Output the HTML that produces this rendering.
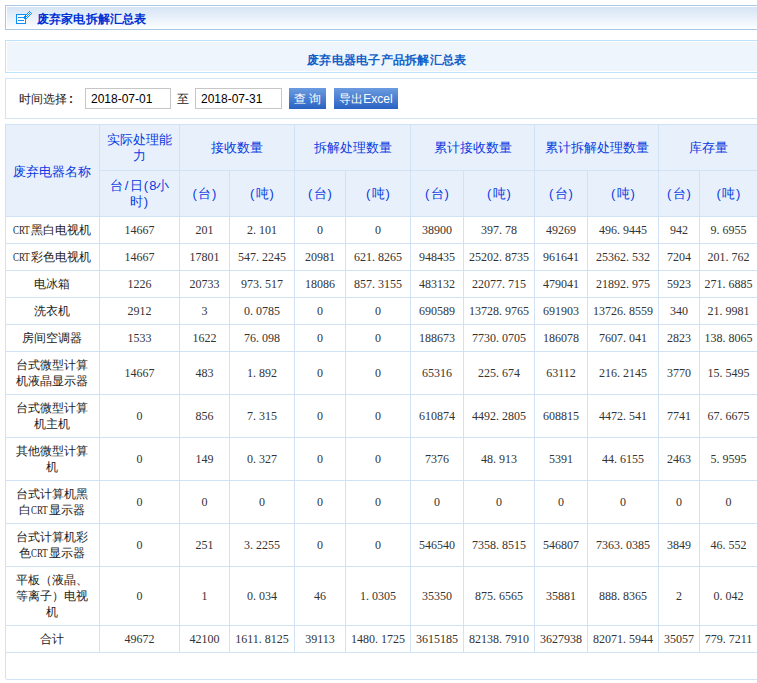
<!DOCTYPE html>
<html><head><meta charset="utf-8"><style>
html,body{margin:0;padding:0;background:#fff;width:757px;height:683px;overflow:hidden;position:relative}
body{font-family:"Liberation Sans",sans-serif;font-size:12px;color:#222}
.box{position:absolute;box-sizing:border-box}
#t1{left:5px;top:5px;width:763px;height:25px;border:1px solid #aac8e4;background:linear-gradient(#d4e3f4,#fdfeff);box-shadow:inset 0 0 0 1px #fff}
#t1 .tx{position:absolute;left:31px;top:6px;font-weight:bold;font-size:12px;color:#0030d4;line-height:14px;letter-spacing:0.15px}
#t2{left:5px;top:40px;width:763px;height:33px;border:1px solid #bde3fb;background:#eff5fd;box-shadow:inset 0 0 0 1px #fff}
#t2 .tx{position:absolute;left:301px;top:12px;letter-spacing:0.25px;font-weight:bold;font-size:12px;color:#1060c8;line-height:14px}
#t3{left:5px;top:78px;width:763px;height:41px;border:1px solid #d2e3f3;background:#fff}
.lbl{position:absolute;top:91px;font-size:12px;color:#222;line-height:16px}
.inp{position:absolute;top:88px;height:21px;box-sizing:border-box;border:1px solid #c6c6c6;background:#fff;font-size:12px;line-height:21px;padding-left:5px;color:#000}
.btn{position:absolute;top:88px;height:21px;box-sizing:border-box;background:linear-gradient(#6b9be0,#2a62c2);color:#fff;font-size:12px;line-height:23px;text-align:center}
.c{position:absolute;box-sizing:content-box;border-right:1px solid #d0e2f4;border-bottom:1px solid #d0e2f4;display:flex;align-items:center;justify-content:center;text-align:center;line-height:16px;overflow:hidden}
#tb{position:absolute;left:5px;top:124px;width:763px;height:555px;box-sizing:border-box;border-left:1px solid #d0e2f4;border-top:1px solid #d0e2f4}
.h{background:#e8f1fb;color:#0a3ae0;font-size:13px;line-height:16px}
.h s{text-decoration:none;display:inline-block;width:6.5px;text-align:center}
.d{background:#fff;color:#222}
.n{font-family:"Liberation Serif",serif;font-size:12px;color:#333}
.n i{font-style:normal;display:inline-block;width:6px;text-align:left}
.crt{font-weight:normal;font-family:"Liberation Serif",serif;display:inline-block;width:18px;white-space:nowrap;vertical-align:top}
.crt u{text-decoration:none;display:inline-block;transform:scaleX(0.74);transform-origin:0 0}
.nm span{position:relative;left:-1px}
.hn span{position:relative;left:-1px;top:1px}
</style></head><body>
<div class="box" id="t1"><svg style="position:absolute;left:10px;top:4px" width="18" height="15" viewBox="0 0 18 15" shape-rendering="crispEdges">
<rect x="0.5" y="4.5" width="9" height="9" fill="#fff" stroke="#0f8ef5" stroke-width="1"/>
<rect x="2" y="7" width="6" height="1" fill="#0f8ef5"/>
<rect x="2" y="10" width="6" height="1" fill="#0f8ef5"/>
<rect x="8" y="6" width="1" height="1" fill="#0a8ef5"/><rect x="9" y="5" width="1" height="1" fill="#0a8ef5"/><rect x="9" y="6" width="1" height="1" fill="#ffffff"/><rect x="9" y="7" width="1" height="1" fill="#0a8ef5"/><rect x="10" y="4" width="1" height="1" fill="#0a8ef5"/><rect x="10" y="5" width="1" height="1" fill="#ffffff"/><rect x="10" y="6" width="1" height="1" fill="#0a8ef5"/><rect x="10" y="7" width="1" height="1" fill="#ffffff"/><rect x="10" y="8" width="1" height="1" fill="#0a8ef5"/><rect x="11" y="3" width="1" height="1" fill="#0a8ef5"/><rect x="11" y="4" width="1" height="1" fill="#ffffff"/><rect x="11" y="5" width="1" height="1" fill="#0a8ef5"/><rect x="11" y="6" width="1" height="1" fill="#ffffff"/><rect x="11" y="7" width="1" height="1" fill="#0a8ef5"/><rect x="12" y="2" width="1" height="1" fill="#0a8ef5"/><rect x="12" y="3" width="1" height="1" fill="#ffffff"/><rect x="12" y="4" width="1" height="1" fill="#0a8ef5"/><rect x="12" y="5" width="1" height="1" fill="#ffffff"/><rect x="12" y="6" width="1" height="1" fill="#0a8ef5"/><rect x="13" y="1" width="1" height="1" fill="#0a8ef5"/><rect x="13" y="2" width="1" height="1" fill="#ffffff"/><rect x="13" y="3" width="1" height="1" fill="#0a8ef5"/><rect x="13" y="4" width="1" height="1" fill="#ffffff"/><rect x="13" y="5" width="1" height="1" fill="#0a8ef5"/><rect x="14" y="2" width="1" height="1" fill="#0a8ef5"/><rect x="14" y="3" width="1" height="1" fill="#ffffff"/><rect x="14" y="4" width="1" height="1" fill="#0a8ef5"/><rect x="15" y="3" width="1" height="1" fill="#0a8ef5"/><rect x="8" y="6" width="2" height="3" fill="#0a8ef5"/>
</svg><div class="tx">废弃家电拆解汇总表</div></div>
<div class="box" id="t2"><div class="tx">废弃电器电子产品拆解汇总表</div></div>
<div class="box" id="t3"></div>
<div class="lbl" style="left:19px">时间选择<span style="margin-left:2px;font-weight:bold">:</span></div>
<div class="inp" style="left:85px;width:86px">2018-07-01</div>
<div class="lbl" style="left:177px">至</div>
<div class="inp" style="left:195px;width:87px">2018-07-31</div>
<div class="btn" style="left:289px;width:37px;letter-spacing:3px;text-align:left;padding-left:5px">查询</div>
<div class="btn" style="left:334px;width:64px">导出Excel</div>
<div id="tb"></div>
<div class="c h hn" style="left:6px;top:125px;width:93px;height:91px"><span>废弃电器名称</span></div><div class="c h" style="left:100px;top:125px;width:79px;height:45px"><span>实际处理能<br>力</span></div><div class="c h" style="left:100px;top:171px;width:79px;height:45px"><span>台<s>/</s>日<s>(</s><s>8</s>小<br>时<s>)</s></span></div><div class="c h" style="left:180px;top:125px;width:114px;height:45px"><span>接收数量</span></div><div class="c h" style="left:180px;top:171px;width:49px;height:45px"><span><s>(</s>台<s>)</s></span></div><div class="c h" style="left:230px;top:171px;width:64px;height:45px"><span><s>(</s>吨<s>)</s></span></div><div class="c h" style="left:295px;top:125px;width:115px;height:45px"><span>拆解处理数量</span></div><div class="c h" style="left:295px;top:171px;width:50px;height:45px"><span><s>(</s>台<s>)</s></span></div><div class="c h" style="left:346px;top:171px;width:64px;height:45px"><span><s>(</s>吨<s>)</s></span></div><div class="c h" style="left:411px;top:125px;width:123px;height:45px"><span>累计接收数量</span></div><div class="c h" style="left:411px;top:171px;width:52px;height:45px"><span><s>(</s>台<s>)</s></span></div><div class="c h" style="left:464px;top:171px;width:70px;height:45px"><span><s>(</s>吨<s>)</s></span></div><div class="c h" style="left:535px;top:125px;width:123px;height:45px"><span>累计拆解处理数量</span></div><div class="c h" style="left:535px;top:171px;width:52px;height:45px"><span><s>(</s>台<s>)</s></span></div><div class="c h" style="left:588px;top:171px;width:70px;height:45px"><span><s>(</s>吨<s>)</s></span></div><div class="c h" style="left:659px;top:125px;width:98px;height:45px"><span>库存量</span></div><div class="c h" style="left:659px;top:171px;width:40px;height:45px"><span><s>(</s>台<s>)</s></span></div><div class="c h" style="left:700px;top:171px;width:57px;height:45px"><span><s>(</s>吨<s>)</s></span></div><div class="c d nm" style="left:6px;top:217px;width:93px;height:26px"><span><b class="crt"><u>CRT</u></b>黑白电视机</span></div><div class="c d n" style="left:100px;top:217px;width:79px;height:26px"><span>14667</span></div><div class="c d n" style="left:180px;top:217px;width:49px;height:26px"><span>201</span></div><div class="c d n" style="left:230px;top:217px;width:64px;height:26px"><span>2<i>.</i>101</span></div><div class="c d n" style="left:295px;top:217px;width:50px;height:26px"><span>0</span></div><div class="c d n" style="left:346px;top:217px;width:64px;height:26px"><span>0</span></div><div class="c d n" style="left:411px;top:217px;width:52px;height:26px"><span>38900</span></div><div class="c d n" style="left:464px;top:217px;width:70px;height:26px"><span>397<i>.</i>78</span></div><div class="c d n" style="left:535px;top:217px;width:52px;height:26px"><span>49269</span></div><div class="c d n" style="left:588px;top:217px;width:70px;height:26px"><span>496<i>.</i>9445</span></div><div class="c d n" style="left:659px;top:217px;width:40px;height:26px"><span>942</span></div><div class="c d n" style="left:700px;top:217px;width:57px;height:26px"><span>9<i>.</i>6955</span></div><div class="c d nm" style="left:6px;top:244px;width:93px;height:26px"><span><b class="crt"><u>CRT</u></b>彩色电视机</span></div><div class="c d n" style="left:100px;top:244px;width:79px;height:26px"><span>14667</span></div><div class="c d n" style="left:180px;top:244px;width:49px;height:26px"><span>17801</span></div><div class="c d n" style="left:230px;top:244px;width:64px;height:26px"><span>547<i>.</i>2245</span></div><div class="c d n" style="left:295px;top:244px;width:50px;height:26px"><span>20981</span></div><div class="c d n" style="left:346px;top:244px;width:64px;height:26px"><span>621<i>.</i>8265</span></div><div class="c d n" style="left:411px;top:244px;width:52px;height:26px"><span>948435</span></div><div class="c d n" style="left:464px;top:244px;width:70px;height:26px"><span>25202<i>.</i>8735</span></div><div class="c d n" style="left:535px;top:244px;width:52px;height:26px"><span>961641</span></div><div class="c d n" style="left:588px;top:244px;width:70px;height:26px"><span>25362<i>.</i>532</span></div><div class="c d n" style="left:659px;top:244px;width:40px;height:26px"><span>7204</span></div><div class="c d n" style="left:700px;top:244px;width:57px;height:26px"><span>201<i>.</i>762</span></div><div class="c d nm" style="left:6px;top:271px;width:93px;height:26px"><span>电冰箱</span></div><div class="c d n" style="left:100px;top:271px;width:79px;height:26px"><span>1226</span></div><div class="c d n" style="left:180px;top:271px;width:49px;height:26px"><span>20733</span></div><div class="c d n" style="left:230px;top:271px;width:64px;height:26px"><span>973<i>.</i>517</span></div><div class="c d n" style="left:295px;top:271px;width:50px;height:26px"><span>18086</span></div><div class="c d n" style="left:346px;top:271px;width:64px;height:26px"><span>857<i>.</i>3155</span></div><div class="c d n" style="left:411px;top:271px;width:52px;height:26px"><span>483132</span></div><div class="c d n" style="left:464px;top:271px;width:70px;height:26px"><span>22077<i>.</i>715</span></div><div class="c d n" style="left:535px;top:271px;width:52px;height:26px"><span>479041</span></div><div class="c d n" style="left:588px;top:271px;width:70px;height:26px"><span>21892<i>.</i>975</span></div><div class="c d n" style="left:659px;top:271px;width:40px;height:26px"><span>5923</span></div><div class="c d n" style="left:700px;top:271px;width:57px;height:26px"><span>271<i>.</i>6885</span></div><div class="c d nm" style="left:6px;top:298px;width:93px;height:26px"><span>洗衣机</span></div><div class="c d n" style="left:100px;top:298px;width:79px;height:26px"><span>2912</span></div><div class="c d n" style="left:180px;top:298px;width:49px;height:26px"><span>3</span></div><div class="c d n" style="left:230px;top:298px;width:64px;height:26px"><span>0<i>.</i>0785</span></div><div class="c d n" style="left:295px;top:298px;width:50px;height:26px"><span>0</span></div><div class="c d n" style="left:346px;top:298px;width:64px;height:26px"><span>0</span></div><div class="c d n" style="left:411px;top:298px;width:52px;height:26px"><span>690589</span></div><div class="c d n" style="left:464px;top:298px;width:70px;height:26px"><span>13728<i>.</i>9765</span></div><div class="c d n" style="left:535px;top:298px;width:52px;height:26px"><span>691903</span></div><div class="c d n" style="left:588px;top:298px;width:70px;height:26px"><span>13726<i>.</i>8559</span></div><div class="c d n" style="left:659px;top:298px;width:40px;height:26px"><span>340</span></div><div class="c d n" style="left:700px;top:298px;width:57px;height:26px"><span>21<i>.</i>9981</span></div><div class="c d nm" style="left:6px;top:325px;width:93px;height:26px"><span>房间空调器</span></div><div class="c d n" style="left:100px;top:325px;width:79px;height:26px"><span>1533</span></div><div class="c d n" style="left:180px;top:325px;width:49px;height:26px"><span>1622</span></div><div class="c d n" style="left:230px;top:325px;width:64px;height:26px"><span>76<i>.</i>098</span></div><div class="c d n" style="left:295px;top:325px;width:50px;height:26px"><span>0</span></div><div class="c d n" style="left:346px;top:325px;width:64px;height:26px"><span>0</span></div><div class="c d n" style="left:411px;top:325px;width:52px;height:26px"><span>188673</span></div><div class="c d n" style="left:464px;top:325px;width:70px;height:26px"><span>7730<i>.</i>0705</span></div><div class="c d n" style="left:535px;top:325px;width:52px;height:26px"><span>186078</span></div><div class="c d n" style="left:588px;top:325px;width:70px;height:26px"><span>7607<i>.</i>041</span></div><div class="c d n" style="left:659px;top:325px;width:40px;height:26px"><span>2823</span></div><div class="c d n" style="left:700px;top:325px;width:57px;height:26px"><span>138<i>.</i>8065</span></div><div class="c d nm" style="left:6px;top:352px;width:93px;height:42px"><span>台式微型计算<br>机液晶显示器</span></div><div class="c d n" style="left:100px;top:352px;width:79px;height:42px"><span>14667</span></div><div class="c d n" style="left:180px;top:352px;width:49px;height:42px"><span>483</span></div><div class="c d n" style="left:230px;top:352px;width:64px;height:42px"><span>1<i>.</i>892</span></div><div class="c d n" style="left:295px;top:352px;width:50px;height:42px"><span>0</span></div><div class="c d n" style="left:346px;top:352px;width:64px;height:42px"><span>0</span></div><div class="c d n" style="left:411px;top:352px;width:52px;height:42px"><span>65316</span></div><div class="c d n" style="left:464px;top:352px;width:70px;height:42px"><span>225<i>.</i>674</span></div><div class="c d n" style="left:535px;top:352px;width:52px;height:42px"><span>63112</span></div><div class="c d n" style="left:588px;top:352px;width:70px;height:42px"><span>216<i>.</i>2145</span></div><div class="c d n" style="left:659px;top:352px;width:40px;height:42px"><span>3770</span></div><div class="c d n" style="left:700px;top:352px;width:57px;height:42px"><span>15<i>.</i>5495</span></div><div class="c d nm" style="left:6px;top:395px;width:93px;height:42px"><span>台式微型计算<br>机主机</span></div><div class="c d n" style="left:100px;top:395px;width:79px;height:42px"><span>0</span></div><div class="c d n" style="left:180px;top:395px;width:49px;height:42px"><span>856</span></div><div class="c d n" style="left:230px;top:395px;width:64px;height:42px"><span>7<i>.</i>315</span></div><div class="c d n" style="left:295px;top:395px;width:50px;height:42px"><span>0</span></div><div class="c d n" style="left:346px;top:395px;width:64px;height:42px"><span>0</span></div><div class="c d n" style="left:411px;top:395px;width:52px;height:42px"><span>610874</span></div><div class="c d n" style="left:464px;top:395px;width:70px;height:42px"><span>4492<i>.</i>2805</span></div><div class="c d n" style="left:535px;top:395px;width:52px;height:42px"><span>608815</span></div><div class="c d n" style="left:588px;top:395px;width:70px;height:42px"><span>4472<i>.</i>541</span></div><div class="c d n" style="left:659px;top:395px;width:40px;height:42px"><span>7741</span></div><div class="c d n" style="left:700px;top:395px;width:57px;height:42px"><span>67<i>.</i>6675</span></div><div class="c d nm" style="left:6px;top:438px;width:93px;height:42px"><span>其他微型计算<br>机</span></div><div class="c d n" style="left:100px;top:438px;width:79px;height:42px"><span>0</span></div><div class="c d n" style="left:180px;top:438px;width:49px;height:42px"><span>149</span></div><div class="c d n" style="left:230px;top:438px;width:64px;height:42px"><span>0<i>.</i>327</span></div><div class="c d n" style="left:295px;top:438px;width:50px;height:42px"><span>0</span></div><div class="c d n" style="left:346px;top:438px;width:64px;height:42px"><span>0</span></div><div class="c d n" style="left:411px;top:438px;width:52px;height:42px"><span>7376</span></div><div class="c d n" style="left:464px;top:438px;width:70px;height:42px"><span>48<i>.</i>913</span></div><div class="c d n" style="left:535px;top:438px;width:52px;height:42px"><span>5391</span></div><div class="c d n" style="left:588px;top:438px;width:70px;height:42px"><span>44<i>.</i>6155</span></div><div class="c d n" style="left:659px;top:438px;width:40px;height:42px"><span>2463</span></div><div class="c d n" style="left:700px;top:438px;width:57px;height:42px"><span>5<i>.</i>9595</span></div><div class="c d nm" style="left:6px;top:481px;width:93px;height:42px"><span>台式计算机黑<br>白<b class="crt"><u>CRT</u></b>显示器</span></div><div class="c d n" style="left:100px;top:481px;width:79px;height:42px"><span>0</span></div><div class="c d n" style="left:180px;top:481px;width:49px;height:42px"><span>0</span></div><div class="c d n" style="left:230px;top:481px;width:64px;height:42px"><span>0</span></div><div class="c d n" style="left:295px;top:481px;width:50px;height:42px"><span>0</span></div><div class="c d n" style="left:346px;top:481px;width:64px;height:42px"><span>0</span></div><div class="c d n" style="left:411px;top:481px;width:52px;height:42px"><span>0</span></div><div class="c d n" style="left:464px;top:481px;width:70px;height:42px"><span>0</span></div><div class="c d n" style="left:535px;top:481px;width:52px;height:42px"><span>0</span></div><div class="c d n" style="left:588px;top:481px;width:70px;height:42px"><span>0</span></div><div class="c d n" style="left:659px;top:481px;width:40px;height:42px"><span>0</span></div><div class="c d n" style="left:700px;top:481px;width:57px;height:42px"><span>0</span></div><div class="c d nm" style="left:6px;top:524px;width:93px;height:42px"><span>台式计算机彩<br>色<b class="crt"><u>CRT</u></b>显示器</span></div><div class="c d n" style="left:100px;top:524px;width:79px;height:42px"><span>0</span></div><div class="c d n" style="left:180px;top:524px;width:49px;height:42px"><span>251</span></div><div class="c d n" style="left:230px;top:524px;width:64px;height:42px"><span>3<i>.</i>2255</span></div><div class="c d n" style="left:295px;top:524px;width:50px;height:42px"><span>0</span></div><div class="c d n" style="left:346px;top:524px;width:64px;height:42px"><span>0</span></div><div class="c d n" style="left:411px;top:524px;width:52px;height:42px"><span>546540</span></div><div class="c d n" style="left:464px;top:524px;width:70px;height:42px"><span>7358<i>.</i>8515</span></div><div class="c d n" style="left:535px;top:524px;width:52px;height:42px"><span>546807</span></div><div class="c d n" style="left:588px;top:524px;width:70px;height:42px"><span>7363<i>.</i>0385</span></div><div class="c d n" style="left:659px;top:524px;width:40px;height:42px"><span>3849</span></div><div class="c d n" style="left:700px;top:524px;width:57px;height:42px"><span>46<i>.</i>552</span></div><div class="c d nm" style="left:6px;top:567px;width:93px;height:58px"><span>平板（液晶、<br>等离子）电视<br>机</span></div><div class="c d n" style="left:100px;top:567px;width:79px;height:58px"><span>0</span></div><div class="c d n" style="left:180px;top:567px;width:49px;height:58px"><span>1</span></div><div class="c d n" style="left:230px;top:567px;width:64px;height:58px"><span>0<i>.</i>034</span></div><div class="c d n" style="left:295px;top:567px;width:50px;height:58px"><span>46</span></div><div class="c d n" style="left:346px;top:567px;width:64px;height:58px"><span>1<i>.</i>0305</span></div><div class="c d n" style="left:411px;top:567px;width:52px;height:58px"><span>35350</span></div><div class="c d n" style="left:464px;top:567px;width:70px;height:58px"><span>875<i>.</i>6565</span></div><div class="c d n" style="left:535px;top:567px;width:52px;height:58px"><span>35881</span></div><div class="c d n" style="left:588px;top:567px;width:70px;height:58px"><span>888<i>.</i>8365</span></div><div class="c d n" style="left:659px;top:567px;width:40px;height:58px"><span>2</span></div><div class="c d n" style="left:700px;top:567px;width:57px;height:58px"><span>0<i>.</i>042</span></div><div class="c d nm" style="left:6px;top:626px;width:93px;height:26px"><span>合计</span></div><div class="c d n" style="left:100px;top:626px;width:79px;height:26px"><span>49672</span></div><div class="c d n" style="left:180px;top:626px;width:49px;height:26px"><span>42100</span></div><div class="c d n" style="left:230px;top:626px;width:64px;height:26px"><span>1611<i>.</i>8125</span></div><div class="c d n" style="left:295px;top:626px;width:50px;height:26px"><span>39113</span></div><div class="c d n" style="left:346px;top:626px;width:64px;height:26px"><span>1480<i>.</i>1725</span></div><div class="c d n" style="left:411px;top:626px;width:52px;height:26px"><span>3615185</span></div><div class="c d n" style="left:464px;top:626px;width:70px;height:26px"><span>82138<i>.</i>7910</span></div><div class="c d n" style="left:535px;top:626px;width:52px;height:26px"><span>3627938</span></div><div class="c d n" style="left:588px;top:626px;width:70px;height:26px"><span>82071<i>.</i>5944</span></div><div class="c d n" style="left:659px;top:626px;width:40px;height:26px"><span>35057</span></div><div class="c d n" style="left:700px;top:626px;width:57px;height:26px"><span>779<i>.</i>7211</span></div><div class="c d" style="left:6px;top:653px;width:751px;height:26px"><span></span></div>
</body></html>
